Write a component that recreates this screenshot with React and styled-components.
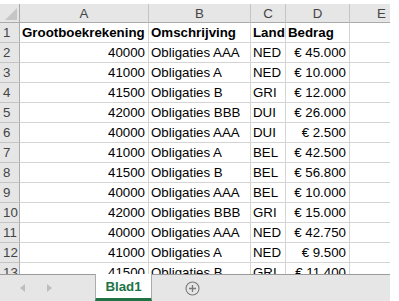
import styled, { createGlobalStyle } from "styled-components";

const GlobalStyle = createGlobalStyle`
  html, body {
    margin: 0;
    padding: 0;
    background: #ffffff;
  }
  body {
    font-family: "Liberation Sans", Arial, sans-serif;
  }
`;

const COLS = "20px 129px 102px 35px 64px 64px";

const rows = [
  ["40000", "Obligaties AAA", "NED", "€ 45.000"],
  ["41000", "Obligaties A", "NED", "€ 10.000"],
  ["41500", "Obligaties B", "GRI", "€ 12.000"],
  ["42000", "Obligaties BBB", "DUI", "€ 26.000"],
  ["40000", "Obligaties AAA", "DUI", "€ 2.500"],
  ["41000", "Obligaties A", "BEL", "€ 42.500"],
  ["41500", "Obligaties B", "BEL", "€ 56.800"],
  ["40000", "Obligaties AAA", "BEL", "€ 10.000"],
  ["42000", "Obligaties BBB", "GRI", "€ 15.000"],
  ["40000", "Obligaties AAA", "NED", "€ 42.750"],
  ["41000", "Obligaties A", "NED", "€ 9.500"],
  ["41500", "Obligaties B", "GRI", "€ 11.400"],
];

const Workbook = styled.div`
  width: 390px;
  height: 301px;
  display: flex;
  flex-direction: column;
  background: #ffffff;
`;

const SheetArea = styled.div`
  height: 274px;
  overflow: hidden;
  padding-top: 4px;
  box-sizing: border-box;
`;

const Grid = styled.div`
  display: grid;
  grid-template-columns: ${COLS};
  grid-auto-rows: 20px;
  grid-template-rows: 19px;
`;

const Corner = styled.div`
  position: relative;
  background: #e6e6e6;
  border-right: 1px solid #ababab;
  border-bottom: 1px solid #ababab;
  box-sizing: border-box;

  &::after {
    content: "";
    position: absolute;
    right: 2px;
    bottom: 2px;
    width: 0;
    height: 0;
    border-left: 12px solid transparent;
    border-bottom: 12px solid #c6c6c6;
  }
`;

const ColHeader = styled.div`
  background: #e6e6e6;
  border-right: 1px solid #c4c4c4;
  border-bottom: 1px solid #ababab;
  box-sizing: border-box;
  display: flex;
  align-items: center;
  justify-content: center;
  font-size: 13.3px;
  color: #444444;
`;

const RowHeader = styled.div`
  background: #e6e6e6;
  border-right: 1px solid #ababab;
  border-bottom: 1px solid #c4c4c4;
  box-sizing: border-box;
  display: flex;
  align-items: flex-end;
  padding: 0 0 2px 3px;
  font-size: 13.3px;
  color: #444444;
`;

const Cell = styled.div`
  border-right: 1px solid #d4d4d4;
  border-bottom: 1px solid #d4d4d4;
  box-sizing: border-box;
  display: flex;
  align-items: flex-end;
  justify-content: ${(p) => (p.$num ? "flex-end" : "flex-start")};
  padding: 0 3px 2px 2px;
  font-size: 13.3px;
  font-weight: ${(p) => (p.$bold ? 700 : 400)};
  color: #000000;
  white-space: nowrap;
  overflow: hidden;
`;

const TabBar = styled.div`
  height: 27px;
  display: flex;
  align-items: stretch;
  background: #e6e6e6;
`;

const Nav = styled.div`
  width: 95px;
  border-top: 1px solid #9b9b9b;
  box-sizing: border-box;
  display: flex;
  align-items: center;
  padding-left: 20px;
  gap: 22px;
`;

const Arrow = styled.span`
  width: 0;
  height: 0;
  border-top: 4px solid transparent;
  border-bottom: 4px solid transparent;
  ${(p) =>
    p.$dir === "left"
      ? "border-right: 5px solid #bdbdbd;"
      : "border-left: 5px solid #bdbdbd;"}
`;

const Tab = styled.div`
  width: 57px;
  background: #ffffff;
  border-left: 1px solid #ababab;
  border-right: 1px solid #ababab;
  border-bottom: 3px solid #217346;
  box-sizing: border-box;
  display: flex;
  align-items: center;
  justify-content: center;
  padding-top: 1px;
  font-size: 13.3px;
  font-weight: 700;
  color: #217346;
`;

const TabRest = styled.div`
  flex: 1;
  border-top: 1px solid #9b9b9b;
  display: flex;
  align-items: center;
  padding-left: 33px;
`;

const AddButton = () => (
  <svg width="15" height="15" viewBox="0 0 15 15">
    <circle cx="7.5" cy="7.5" r="6.5" fill="none" stroke="#7a7a7a" strokeWidth="1.1" />
    <path d="M7.5 4v7M4 7.5h7" stroke="#7a7a7a" strokeWidth="1.3" />
  </svg>
);

export default function App() {
  return (
    <Workbook>
      <GlobalStyle />
      <SheetArea>
        <Grid>
          <Corner />
          {["A", "B", "C", "D", "E"].map((c) => (
            <ColHeader key={c}>{c}</ColHeader>
          ))}

          <RowHeader>1</RowHeader>
          <Cell $bold>Grootboekrekening</Cell>
          <Cell $bold>Omschrijving</Cell>
          <Cell $bold>Land</Cell>
          <Cell $bold>Bedrag</Cell>
          <Cell />

          {rows.map((r, i) => [
            <RowHeader key={`h${i}`}>{i + 2}</RowHeader>,
            <Cell key={`a${i}`} $num>{r[0]}</Cell>,
            <Cell key={`b${i}`}>{r[1]}</Cell>,
            <Cell key={`c${i}`}>{r[2]}</Cell>,
            <Cell key={`d${i}`} $num>{r[3]}</Cell>,
            <Cell key={`e${i}`} />,
          ])}
        </Grid>
      </SheetArea>
      <TabBar>
        <Nav>
          <Arrow $dir="left" />
          <Arrow $dir="right" />
        </Nav>
        <Tab>Blad1</Tab>
        <TabRest>
          <AddButton />
        </TabRest>
      </TabBar>
    </Workbook>
  );
}
